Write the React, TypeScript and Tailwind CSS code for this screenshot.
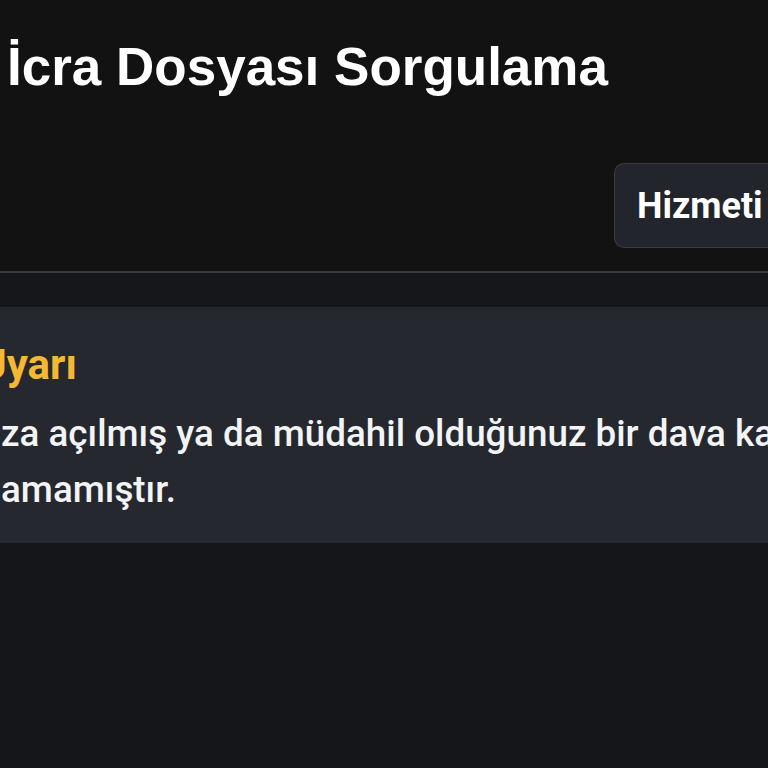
import React from 'react';

const App: React.FC = () => {
  return (
    <div className="w-[768px] h-[768px] overflow-hidden bg-[#15161a] text-white font-['Roboto','Noto_Sans',sans-serif]">
      <header className="h-[271px] bg-[#121213]">
        <h1 className="pl-[7px] pt-[40px] text-[53px] leading-none font-bold whitespace-nowrap font-['Liberation_Sans',Arial,sans-serif]">
          İcra Dosyası Sorgulama
        </h1>
        <div className="flex pl-[614px] mt-[70px]">
          <button className="flex items-center h-[85px] pl-[22px] pr-8 shrink-0 rounded-l-[10px] border border-r-0 border-[#3a3c42] bg-[#23252c] text-[36px] font-bold whitespace-nowrap">
            Hizmeti Kullan
          </button>
        </div>
      </header>
      <div className="h-[2px] bg-[#3a3b3f]" />
      <div className="h-[34px] bg-[#16171a]" />
      <section className="h-[236px] bg-[#262830] pt-[33px]">
        <h2 className="-ml-[21px] text-[42px] leading-[50px] font-bold text-[#f4b832] whitespace-nowrap">
          Uyarı
        </h2>
        <p className="mt-[16px] pl-[1px] text-[36.8px] leading-[56px] font-medium text-[#f3f4f6] whitespace-nowrap">
          za açılmış ya da müdahil olduğunuz bir dava kaydı
          <br />
          amamıştır.
        </p>
      </section>
    </div>
  );
};

export default App;
